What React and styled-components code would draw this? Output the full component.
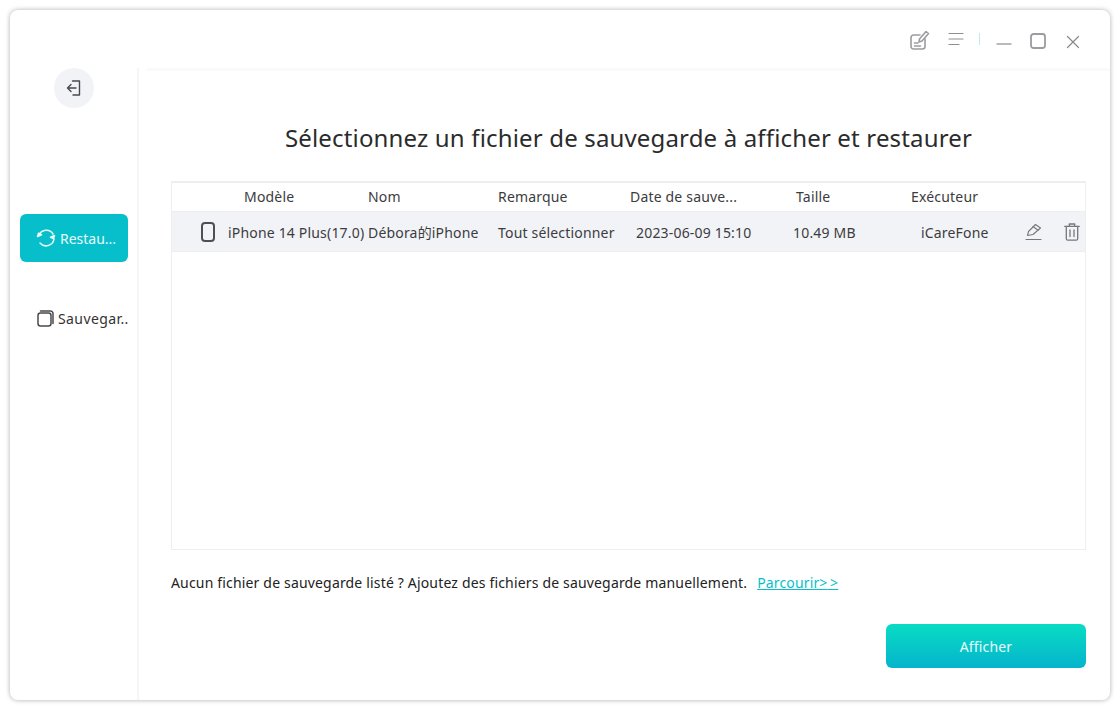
import React from "react";
import styled, { createGlobalStyle } from "styled-components";

const Global = createGlobalStyle`
  html, body { margin: 0; padding: 0; background: #fff; }
  body { width: 1120px; height: 710px; overflow: hidden; font-family: "Noto Sans", "Noto Sans CJK SC", sans-serif; }
  * { box-sizing: border-box; }
`;

const Stage = styled.div`
  width: 1120px;
  height: 710px;
  padding: 10px;
`;
const Win = styled.div`
  width: 1100px;
  height: 690px;
  background: #fff;
  border-radius: 8px;
  box-shadow: 0 0 5px rgba(0, 0, 0, 0.32);
  display: flex;
  flex-direction: column;
`;
const TitleBar = styled.header`
  height: 58px;
  flex: none;
  display: flex;
  align-items: flex-start;
  justify-content: flex-end;
  padding: 17px 30px 0 0;
`;
const TitleBtn = styled.button`
  width: ${(p) => p.$w}px;
  height: 24px;
  margin: ${(p) => p.$mt || 0}px 0 0 ${(p) => p.$ml || 0}px;
  padding: 0;
  border: 0;
  background: none;
  display: flex;
  align-items: center;
  justify-content: center;
`;
const Sep = styled.span`
  width: 1px;
  height: 12px;
  margin: 6px 0 0 14px;
  background: #bfe9ea;
`;
const Body = styled.div`
  flex: 1;
  display: flex;
  min-height: 0;
`;
const Side = styled.aside`
  width: 129px;
  flex: none;
  border-right: 2px solid #f6f6f7;
  display: flex;
  flex-direction: column;
  align-items: center;
`;
const BackBtn = styled.button`
  width: 40px;
  height: 40px;
  padding: 0;
  border: 0;
  border-radius: 50%;
  background: #f2f3f7;
  display: flex;
  align-items: center;
  justify-content: center;
  margin: 0 0 106px 0;
`;
const Nav = styled.div`
  width: 108px;
  height: 48px;
  margin: 0 0 ${(p) => p.$mb || 0}px 1px;
  border-radius: 6px;
  background: ${(p) => (p.$active ? "#07bfcb" : "transparent")};
  color: ${(p) => (p.$active ? "#e6fbfb" : "#333")};
  display: flex;
  align-items: center;
  padding-left: ${(p) => p.$pl}px;
  font-size: 14px;
  white-space: nowrap;
  svg { flex: none; }
`;
const NavLabel = styled.span`
  margin-left: ${(p) => p.$ml}px;
  letter-spacing: ${(p) => p.$ls}px;
`;
const Main = styled.main`
  flex: 1;
  min-width: 0;
  display: flex;
  flex-direction: column;
  margin-left: 8px;
  border-top: 3px solid #fafafb;
  padding: 0 24px 0 24px;
`;
const Title = styled.h1`
  margin: 49px 0 25px;
  height: 36px;
  line-height: 36px;
  text-align: center;
  font-size: 24px;
  font-weight: 400;
  color: #2b2b2b;
  letter-spacing: 0.16px;
`;
const Table = styled.div`
  height: 369px;
  flex: none;
  border: 1px solid #eeeef0;
  border-top-width: 2px;
`;
const Row = styled.div`
  display: grid;
  grid-template-columns: 56px 140px 130px 132px 160px 121px 114px 39px 1fr;
  height: ${(p) => (p.$head ? 28 : 41)}px;
  padding-top: ${(p) => (p.$head ? 0 : 2)}px;
  align-items: center;
  font-size: 14px;
  line-height: 20px;
  letter-spacing: 0.18px;
  white-space: nowrap;
  color: #3c3c3e;
  background: ${(p) => (p.$head ? "#fff" : "#f2f3f7")};
  border-top: ${(p) => (p.$head ? "0" : "1px solid #eeeef0")};
  border-bottom: ${(p) => (p.$head ? "0" : "1px solid #eeeef0")};
`;
const Cell = styled.div`
  padding-left: ${(p) => p.$pad || 0}px;
  margin-top: ${(p) => (p.$icon ? -2 : 0)}px;
  display: flex;
  align-items: center;
  min-width: 0;
`;
const Hint = styled.p`
  margin: 22px 0 0;
  height: 22px;
  line-height: 22px;
  font-size: 14px;
  letter-spacing: 0.17px;
  color: #222;
  white-space: nowrap;
`;
const Link = styled.a`
  margin-left: 10px;
  color: #07bfcb;
  letter-spacing: 0.15px;
  text-decoration: underline;
`;
const Footer = styled.div`
  display: flex;
  justify-content: flex-end;
  margin-top: 30px;
`;
const Primary = styled.button`
  width: 200px;
  height: 44px;
  border: 0;
  border-radius: 6px;
  background: linear-gradient(180deg, #08dcc4 0%, #06b4cc 100%);
  color: #e8fbfb;
  font: 400 14px "Noto Sans", sans-serif;
  letter-spacing: 0.18px;
`;

const Svg = ({ w, h = w, children, sw = 1.4, c = "currentColor" }) => (
  <svg width={w} height={h} viewBox={`0 0 ${w} ${h}`} fill="none" stroke={c} strokeWidth={sw} strokeLinecap="round" strokeLinejoin="round">
    {children}
  </svg>
);

const columns = ["Modèle", "Nom", "Remarque", "Date de sauve...", "Taille", "Exécuteur"];
const headPads = [16, 0, 0, 0, 6, 0];

export default function App() {
  return (
    <>
      <Global />
      <Stage>
        <Win>
          <TitleBar>
            <TitleBtn $w={20} $mt={1}>
              <Svg w={20} h={20} sw={1.6} c="#9c9ca0">
                <path d="M10 5H3.5A2.5 2.5 0 0 0 1 7.5v9A2.5 2.5 0 0 0 3.5 19h9a2.5 2.5 0 0 0 2.5-2.5V9" />
                <path d="M9 12l.5-3L16 1.5l2.5 2L12 11z" />
                <path d="M4.5 13h3.5M4.5 16h6" />
              </Svg>
            </TitleBtn>
            <TitleBtn $w={18} $ml={17}>
              <Svg w={18} h={16} sw={1.2} c="#8f8f93">
                <path d="M2 2.5h14M2 8h14M2 13.5h10" />
              </Svg>
            </TitleBtn>
            <Sep />
            <TitleBtn $w={16} $ml={16} $mt={3}>
              <Svg w={16} h={16} sw={1.2} c="#77777b">
                <path d="M1 10h14" />
              </Svg>
            </TitleBtn>
            <TitleBtn $w={18} $ml={17} $mt={2}>
              <Svg w={16} h={16} sw={1.8} c="#9c9ca0">
                <rect x="1" y="1" width="14" height="14" rx="2.5" />
              </Svg>
            </TitleBtn>
            <TitleBtn $w={14} $ml={19} $mt={3}>
              <Svg w={14} h={14} sw={1.2} c="#88888c">
                <path d="M1.5 1.5l11 11M12.5 1.5l-11 11" />
              </Svg>
            </TitleBtn>
          </TitleBar>
          <Body>
            <Side>
              <BackBtn>
                <Svg w={18} h={18} sw={1.4} c="#4a4a4e">
                  <path d="M7.5 2H14.5V16H8" />
                  <path d="M11 9H2.5M6 5.5L2.5 9 6 12.5" />
                </Svg>
              </BackBtn>
              <Nav $active $pl={16} $mb={32}>
                <Svg w={20} h={20} sw={1.5} c="#e9fbfb">
                  <path d="M3 7A8 8 0 0 1 17 6" />
                  <path d="M18 11A8 8 0 0 1 4 15" />
                  <path d="M18.5 7.5l-1 3-3-1.2z" fill="#e9fbfb" />
                  <path d="M1.5 8.5l1-3.2 3 1.4z" fill="#e9fbfb" />
                </Svg>
                <NavLabel $ml={4} $ls={0}>Restau...</NavLabel>
              </Nav>
              <Nav $pl={17}>
                <Svg w={17} h={17} sw={1.5} c="#4a4a4e">
                  <rect x="1" y="3" width="13" height="13" rx="2.5" />
                  <path d="M3.5 1h10A2.5 2.5 0 0 1 16 3.5v10" />
                </Svg>
                <NavLabel $ml={4} $ls={0.4}>Sauvegar..</NavLabel>
              </Nav>
            </Side>
            <Main>
              <Title>Sélectionnez un fichier de sauvegarde à afficher et restaurer</Title>
              <Table>
                <Row $head>
                  <Cell />
                  {columns.map((c, i) => (
                    <Cell key={c} $pad={headPads[i]}>{c}</Cell>
                  ))}
                </Row>
                <Row>
                  <Cell $pad={29} $icon>
                    <Svg w={14} h={20} sw={2} c="#4f4f53">
                      <rect x="1" y="1" width="12" height="18" rx="3" />
                    </Svg>
                  </Cell>
                  <Cell>iPhone 14 Plus(17.0)</Cell>
                  <Cell>Débora的iPhone</Cell>
                  <Cell>Tout sélectionner</Cell>
                  <Cell $pad={6}>2023-06-09 15:10</Cell>
                  <Cell $pad={3}>10.49 MB</Cell>
                  <Cell $pad={10}>iCareFone</Cell>
                  <Cell $icon>
                    <Svg w={17} h={18} sw={1.1} c="#77777b">
                      <path d="M2.5 12.5l1-4L10.5 1.5l5 3.5-7.5 6.5z" />
                      <path d="M8 3.5l5 3.7" />
                      <path d="M1 16.5h15" />
                    </Svg>
                  </Cell>
                  <Cell $icon>
                    <Svg w={16} h={18} sw={1.3} c="#77777b">
                      <path d="M.7 3.3h14.6M5.3 3V1h5.4v2" />
                      <path d="M2.3 3.5v12.2a1.5 1.5 0 0 0 1.5 1.5h8.4a1.5 1.5 0 0 0 1.5-1.5V3.5" />
                      <path d="M6 7v6.5M10 7v6.5" />
                    </Svg>
                  </Cell>
                </Row>
              </Table>
              <Hint>
                Aucun fichier de sauvegarde listé ? Ajoutez des fichiers de sauvegarde manuellement.
                <Link>Parcourir&gt;{"\u2009"}&gt;</Link>
              </Hint>
              <Footer>
                <Primary>Afficher</Primary>
              </Footer>
            </Main>
          </Body>
        </Win>
      </Stage>
    </>
  );
}
